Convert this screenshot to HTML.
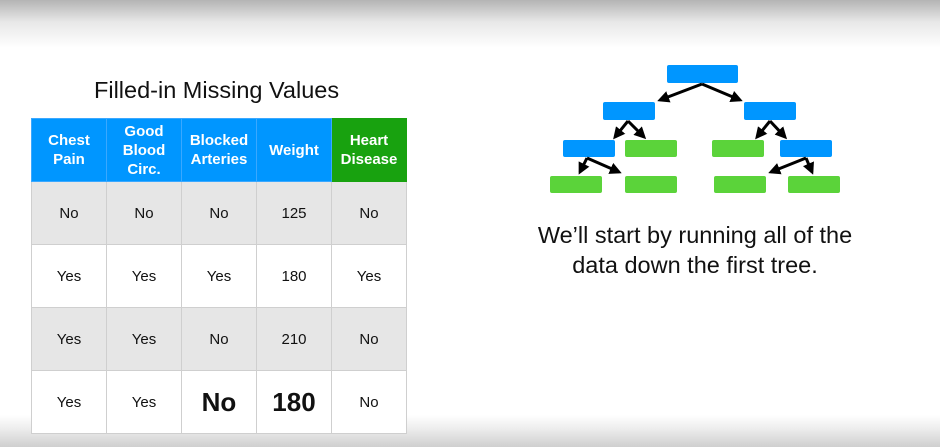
<!DOCTYPE html>
<html><head><style>
body{margin:0;width:940px;height:447px;overflow:hidden;position:relative;font-family:"Liberation Sans",Arial,sans-serif;background:linear-gradient(#b4b4b4 0px,#e8e8e8 22px,#fff 48px,#fff 415px,#eeeeee 428px,#cfcfcf 447px);}
.t{position:absolute;left:94px;top:77px;font-size:23.5px;color:#111;white-space:nowrap}
table{position:absolute;left:31px;top:118px;border-collapse:collapse;}
td{width:74px;height:62px;border:1px solid #cfcfcf;text-align:center;font-size:15px;color:#111;padding:0}
tr.h td{height:62px;background:#0096ff;color:#fff;font-weight:bold;font-size:15px;line-height:19px;border-color:#3aa8ff}
tr.h td.g{background:#18a20f;border-color:#18a20f}
tr.gr td{background:#e6e6e6}
tr.w td{background:#fff}
.b{font-weight:bold;font-size:26px}
.c{position:absolute;left:495px;top:220px;width:400px;text-align:center;font-size:23.5px;line-height:30px;color:#111}
</style></head><body>
<div class="t">Filled-in Missing Values</div>
<table>
<tr class="h"><td>Chest<br>Pain</td><td>Good<br>Blood<br>Circ.</td><td>Blocked<br>Arteries</td><td>Weight</td><td class="g">Heart<br>Disease</td></tr>
<tr class="gr"><td>No</td><td>No</td><td>No</td><td>125</td><td>No</td></tr>
<tr class="w"><td>Yes</td><td>Yes</td><td>Yes</td><td>180</td><td>Yes</td></tr>
<tr class="gr"><td>Yes</td><td>Yes</td><td>No</td><td>210</td><td>No</td></tr>
<tr class="w"><td>Yes</td><td>Yes</td><td class="b">No</td><td class="b">180</td><td>No</td></tr>
</table>
<svg style="position:absolute;left:0;top:0" width="940" height="447">
<defs><marker id="a" markerWidth="4" markerHeight="4" refX="3" refY="2" orient="auto"><path d="M0,0L4,2L0,4z" fill="#000"/></marker></defs>
<g fill="#0096ff">
<rect x="667" y="65" width="71" height="18" rx="2"/>
<rect x="603" y="102" width="52" height="18" rx="2"/>
<rect x="744" y="102" width="52" height="18" rx="2"/>
<rect x="563" y="140" width="52" height="17" rx="2"/>
<rect x="780" y="140" width="52" height="17" rx="2"/>
</g>
<g fill="#5bd33a">
<rect x="625" y="140" width="52" height="17" rx="2"/>
<rect x="712" y="140" width="52" height="17" rx="2"/>
<rect x="550" y="176" width="52" height="17" rx="2"/>
<rect x="625" y="176" width="52" height="17" rx="2"/>
<rect x="714" y="176" width="52" height="17" rx="2"/>
<rect x="788" y="176" width="52" height="17" rx="2"/>
</g>
<g stroke="#000" stroke-width="3" fill="none" marker-end="url(#a)">
<path d="M702,84L660,100"/><path d="M702,84L740,100"/>
<path d="M628,121L615,137"/><path d="M628,121L644,137"/>
<path d="M770,121L757,137"/><path d="M770,121L785,137"/>
<path d="M587,158L580,172"/><path d="M587,158L619,172"/>
<path d="M806,158L771,172"/><path d="M806,158L812,172"/>
</g>
</svg>
<div class="c">We’ll start by running all of the<br>data down the first tree.</div>
</body></html>
